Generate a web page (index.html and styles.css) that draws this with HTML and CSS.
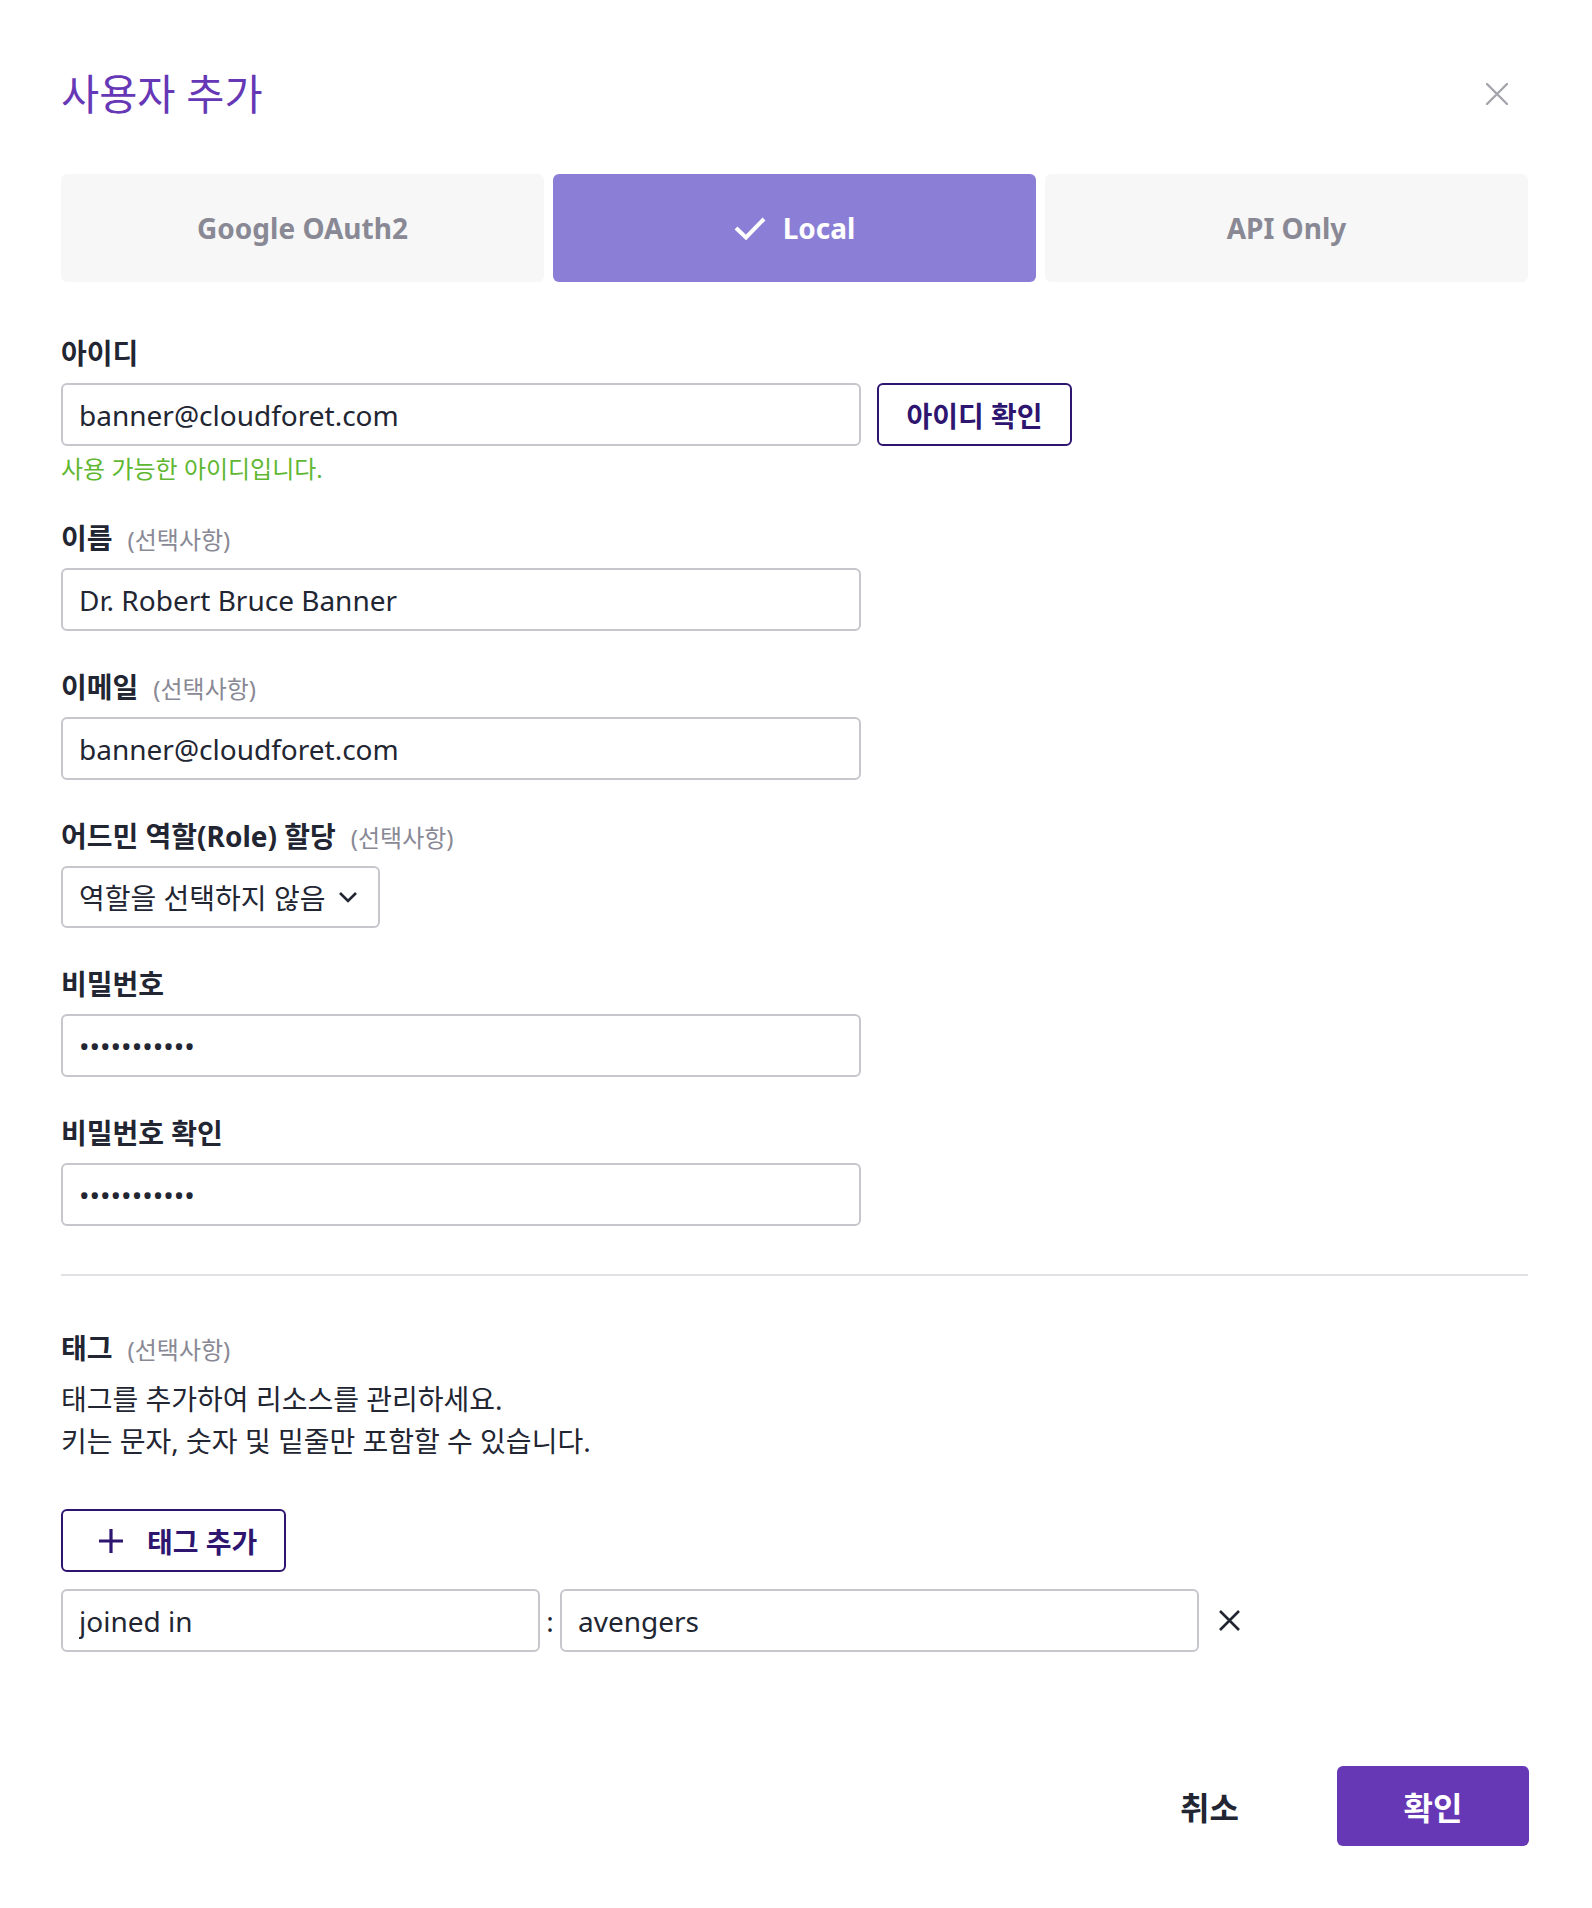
FILE: index.html
```html
<!DOCTYPE html>
<html lang="ko">
<head>
<meta charset="utf-8">
<title>사용자 추가</title>
<link rel="stylesheet" href="styles.css">
</head>
<body>
<div class="modal">
  <header class="modal-header">
    <h1 class="title">사용자 추가</h1>
    <button class="close" type="button" aria-label="닫기">
      <svg width="22" height="22" viewBox="0 0 22 22"><path d="M1 1L21 21M21 1L1 21" stroke="#a4a4ac" stroke-width="2.4" stroke-linecap="round" fill="none"/></svg>
    </button>
  </header>

  <div class="tabs">
    <div class="tab">Google OAuth2</div>
    <div class="tab tab-active">
      <svg class="tab-check" width="32" height="24" viewBox="0 0 32 24"><polyline points="2,12 12,21.5 30,3" stroke="#fff" stroke-width="4" fill="none"/></svg>
      <span>Local</span>
    </div>
    <div class="tab">API Only</div>
  </div>

  <form class="form">
    <div class="field field-help">
      <label class="label">아이디</label>
      <div class="input-row">
        <input class="input" type="text" value="banner@cloudforet.com">
        <button class="btn-outline" type="button">아이디 확인</button>
      </div>
      <p class="help">사용 가능한 아이디입니다.</p>
    </div>

    <div class="field">
      <label class="label">이름<span class="optional">(선택사항)</span></label>
      <input class="input" type="text" value="Dr. Robert Bruce Banner">
    </div>

    <div class="field">
      <label class="label">이메일<span class="optional">(선택사항)</span></label>
      <input class="input" type="text" value="banner@cloudforet.com">
    </div>

    <div class="field">
      <label class="label">어드민 역할(Role) 할당<span class="optional">(선택사항)</span></label>
      <div class="select">
        <span>역할을 선택하지 않음</span>
        <svg width="20" height="12" viewBox="0 0 20 12"><polyline points="2,2 10,10 18,2" stroke="#222532" stroke-width="2.6" fill="none"/></svg>
      </div>
    </div>

    <div class="field">
      <label class="label">비밀번호</label>
      <input class="input" type="password" value="abcdefghijk">
    </div>

    <div class="field field-last">
      <label class="label">비밀번호 확인</label>
      <input class="input" type="password" value="abcdefghijk">
    </div>
  </form>

  <hr class="divider">

  <section class="tags">
    <div class="label">태그<span class="optional">(선택사항)</span></div>
    <p class="desc">태그를 추가하여 리소스를 관리하세요.<br>키는 문자, 숫자 및 밑줄만 포함할 수 있습니다.</p>
    <button class="btn-add" type="button">
      <svg width="26" height="26" viewBox="0 0 26 26"><path d="M13 1V25M1 13H25" stroke="#2e1570" stroke-width="3.2" fill="none"/></svg>
      <span>태그 추가</span>
    </button>
    <div class="tag-row">
      <input class="input tag-key" type="text" value="joined in">
      <span class="colon">:</span>
      <input class="input tag-value" type="text" value="avengers">
      <button class="tag-remove" type="button" aria-label="삭제">
        <svg width="23" height="23" viewBox="0 0 23 23"><path d="M2 2L21 21M21 2L2 21" stroke="#222532" stroke-width="2.6" fill="none"/></svg>
      </button>
    </div>
  </section>

  <footer class="footer">
    <button class="btn-cancel" type="button">취소</button>
    <button class="btn-primary" type="button">확인</button>
  </footer>
</div>
</body>
</html>
```

FILE: styles.css
```css
* {
  box-sizing: border-box;
}

body {
  margin: 0;
  background: #ffffff;
  font-family: "Noto Sans", "Noto Sans CJK KR", sans-serif;
  color: #222532;
}

.modal {
  width: 1592px;
  padding: 69px 64px 0 61px;
}

.modal-header {
  display: flex;
  justify-content: space-between;
  align-items: center;
  height: 50px;
}

.title {
  margin: 0;
  font-size: 41.5px;
  font-weight: 400;
  line-height: 50px;
  color: #6638b6;
}

.close {
  display: flex;
  width: 22px;
  height: 22px;
  margin-right: 20px;
  padding: 0;
  border: 0;
  background: none;
}

.tabs {
  display: grid;
  grid-template-columns: repeat(3, 1fr);
  gap: 9px;
  margin-top: 55px;
}

.tab {
  display: flex;
  align-items: center;
  justify-content: center;
  gap: 17px;
  height: 108px;
  border-radius: 6px;
  background: #f7f7f7;
  font-size: 28px;
  font-weight: 700;
  color: #898995;
}

.tab-active {
  background: #8b7ed6;
  color: #ffffff;
}

.form {
  margin-top: 53px;
}

.field {
  margin-bottom: 38px;
}

.field-help {
  margin-bottom: 36px;
}

.field-last {
  margin-bottom: 0;
}

.label {
  display: flex;
  align-items: baseline;
  height: 36px;
  margin-bottom: 12px;
  font-size: 28px;
  font-weight: 700;
  line-height: 36px;
  color: #222532;
}

.optional {
  margin-left: 15px;
  font-size: 24px;
  font-weight: 400;
  line-height: 36px;
  color: #898995;
}

.input {
  display: block;
  width: 800px;
  height: 63px;
  padding: 0 16px;
  border: 2px solid #c6c7cc;
  border-radius: 6px;
  background: #ffffff;
  font: inherit;
  font-size: 28px;
  color: #222532;
  outline: none;
}

.input-row {
  display: flex;
  gap: 16px;
}

.btn-outline {
  width: 195px;
  height: 63px;
  border: 2px solid #2e1570;
  border-radius: 6px;
  background: #ffffff;
  font: inherit;
  font-size: 28px;
  font-weight: 700;
  color: #2e1570;
}

.help {
  margin: 8px 0 0;
  font-size: 24px;
  line-height: 30px;
  color: #60b731;
}

.select {
  display: flex;
  align-items: center;
  justify-content: space-between;
  width: 319px;
  height: 62px;
  padding: 0 20px 0 16px;
  border: 2px solid #c6c7cc;
  border-radius: 6px;
  font-size: 28px;
  color: #222532;
}

.divider {
  height: 2px;
  margin: 48px 0 54px;
  border: 0;
  background: #e1e1e5;
}

.desc {
  margin: 12px 0 0;
  font-size: 28px;
  line-height: 42px;
  color: #222532;
}

.btn-add {
  display: flex;
  align-items: center;
  justify-content: flex-start;
  gap: 23px;
  width: 225px;
  height: 63px;
  margin-top: 47px;
  padding: 0 0 0 35px;
  border: 2px solid #2e1570;
  border-radius: 6px;
  background: #ffffff;
  font: inherit;
  font-size: 28px;
  font-weight: 700;
  color: #2e1570;
}

.tag-row {
  display: flex;
  align-items: center;
  margin-top: 17px;
}

.tag-key {
  width: 479px;
}

.tag-value {
  width: 639px;
}

.colon {
  width: 20px;
  text-align: center;
  font-size: 28px;
  color: #222532;
}

.tag-remove {
  display: flex;
  width: 23px;
  height: 23px;
  margin-left: 19px;
  padding: 0;
  border: 0;
  background: none;
}

.footer {
  display: flex;
  justify-content: flex-end;
  align-items: center;
  margin-top: 114px;
  padding-bottom: 62px;
}

.btn-cancel {
  margin-right: 98px;
  padding: 0;
  border: 0;
  background: none;
  font: inherit;
  font-size: 32px;
  font-weight: 700;
  color: #222532;
}

.btn-primary {
  width: 192px;
  height: 80px;
  margin-right: -1px;
  border: 0;
  border-radius: 6px;
  background: #6638b6;
  font: inherit;
  font-size: 32px;
  font-weight: 700;
  color: #ffffff;
}
```
